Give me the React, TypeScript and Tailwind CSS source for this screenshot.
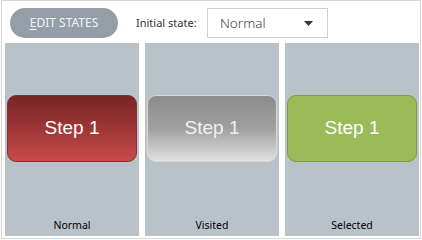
import React from "react";

const font = { fontFamily: '"Noto Sans", "Open Sans", sans-serif' };

function Panel({ label, children }: { label: string; children: React.ReactNode }) {
  return (
    <div className="w-[134px] h-[193px] bg-[#bac2c9] flex flex-col items-center">
      <div className="h-[52px]" />
      {children}
      <div className="flex-1" />
      <div className="text-[10.5px] leading-[14px] text-black pb-[4px]">{label}</div>
    </div>
  );
}

export default function App() {
  return (
    <div className="w-[422px] h-[240px] bg-white relative">
      <div className="ml-[1px] w-[420px] h-[239px] border border-[#d6d6d6] flex flex-col" style={font}>
        <div className="h-[42px] flex items-start pt-[7px] pl-[8px]">
          <div className="w-[108px] h-[30px] rounded-full bg-[#959ea7] flex items-center justify-center text-[12px] text-[#f3f4f5]">
            <span className="underline underline-offset-2">E</span>DIT STATES
          </div>
          <div className="ml-[18px] w-[71px] h-[30px] flex items-center text-[11px] text-[#333]">Initial state:</div>
          <div className="w-[121px] h-[30px] border border-[#d0d0d0] bg-white flex items-center pl-[12px] pr-[14px] justify-between">
            <span className="text-[13.5px] text-[#444] font-light">Normal</span>
            <svg width="9" height="5" viewBox="0 0 9 5"><path d="M0 0 H9 L4.5 5 Z" fill="#333" /></svg>
          </div>
        </div>
        <div className="flex gap-[6px] pl-[3px]">
          <Panel label="Normal">
            <div className="w-[130px] h-[67px] rounded-[9px] bg-gradient-to-b from-[#772424] to-[#c84a4a] border border-[#8a3030] flex items-center justify-center text-white text-[19px] font-['Liberation_Sans',Arial,sans-serif]">
              Step 1
            </div>
          </Panel>
          <Panel label="Visited">
            <div className="w-[130px] h-[67px] rounded-[9px] bg-gradient-to-b from-[#8d8d8d] via-[#a0a0a0] to-[#e2e2e2] border border-[#d8d8d8] flex items-center justify-center text-[#f0f0f0] text-[19px] font-['Liberation_Sans',Arial,sans-serif]">
              Step 1
            </div>
          </Panel>
          <Panel label="Selected">
            <div className="w-[130px] h-[67px] rounded-[9px] bg-[#9bbb59] border border-[#7e9b45] flex items-center justify-center text-white text-[19px] font-['Liberation_Sans',Arial,sans-serif]">
              Step 1
            </div>
          </Panel>
        </div>
      </div>
    </div>
  );
}
